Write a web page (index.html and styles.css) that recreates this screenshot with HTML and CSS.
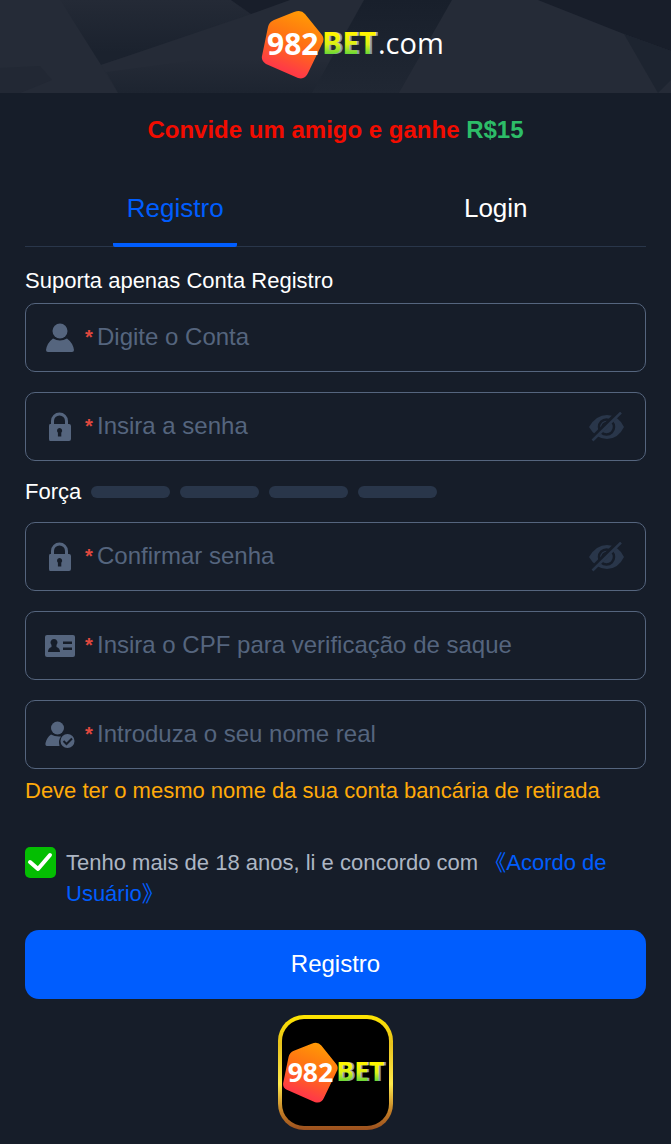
FILE: index.html
```html
<!DOCTYPE html>
<html lang="pt-BR">
<head>
<meta charset="utf-8">
<meta name="viewport" content="width=device-width, initial-scale=1">
<title>982BET.com - Registro</title>
<link rel="stylesheet" href="styles.css">
</head>
<body>
<svg class="defs" aria-hidden="true">
  <defs>
    <linearGradient id="gem" x1="0.65" y1="0" x2="0.3" y2="1">
      <stop offset="0" stop-color="#ff9b04"/><stop offset="0.5" stop-color="#ff6a17"/><stop offset="0.85" stop-color="#ff3c45"/><stop offset="1" stop-color="#ff3434"/>
    </linearGradient>
    <linearGradient id="lime" x1="0" y1="0" x2="0" y2="1">
      <stop offset="0.3" stop-color="#fff500"/><stop offset="0.55" stop-color="#d9f016"/><stop offset="0.8" stop-color="#5fd43a"/>
    </linearGradient>
    <linearGradient id="shadeDown" x1="0" y1="0" x2="0" y2="1">
      <stop offset="0" stop-color="#252b37"/><stop offset="1" stop-color="#1d2430"/>
    </linearGradient>
    <linearGradient id="shadeUp" x1="0" y1="0" x2="0" y2="1">
      <stop offset="0" stop-color="#181f2b"/><stop offset="1" stop-color="#202733"/>
    </linearGradient>
    <linearGradient id="shadeLeft" x1="0" y1="0" x2="0" y2="1">
      <stop offset="0" stop-color="#242a36"/><stop offset="0.8" stop-color="#1b222e"/>
    </linearGradient>
    <symbol id="mark" viewBox="0 0 120 70">
      <path fill="url(#gem)" d="M7 17Q8 12 13 10L33 2Q40-1 44 4L61 25Q64 29 61 34L47 63Q44 70 37 68L5 54Q0 51 1 46Z"/>
      <text class="mark-num" x="6" y="45">982</text>
      <text class="mark-shadow" x="63" y="44">BET</text>
      <text class="mark-bet" x="61" y="44" fill="url(#lime)">BET</text>
    </symbol>
    <symbol id="lock" viewBox="0 0 30 30">
      <path fill="none" stroke="currentColor" stroke-width="3" d="M7.5 13V9a7 7 0 0 1 14 0v4"/>
      <path fill="currentColor" fill-rule="evenodd" d="M5 12h19q2 0 2 2v13q0 2-2 2H5q-1 0-1-2V14q0-2 1-2ZM14.500 16a2.700 2.700 0 0 0-1.600 4.700V24.500h3.400V20.700A2.700 2.700 0 0 0 14.500 16Z"/>
    </symbol>
    <symbol id="eye-off" viewBox="0 0 36 30">
      <path fill="currentColor" d="M0 15Q7 3 18 3 29 3 35 15 29 27 18 27 7 27 0 15Z"/>
      <circle cx="17.500" cy="15" r="7.500" fill="none" stroke="#161d29" stroke-width="2.500"/>
      <path fill="none" stroke="#161d29" stroke-width="2.500" d="M13.500 16q0-5 5-5"/>
      <path stroke="#161d29" stroke-width="5" d="M2 28 31 -1"/>
      <path stroke="currentColor" stroke-width="2.500" d="M3.500 28.500 32 .5"/>
    </symbol>
  </defs>
</svg>

<header class="top">
  <svg class="top-art" viewBox="0 0 671 93" preserveAspectRatio="none" aria-hidden="true">
    <path fill="#252b37" d="M0 0H671V93H0Z"/>
    <path fill="url(#shadeLeft)" d="M60 0H240L260 14 101 65Z"/>
    <path fill="#252b37" d="M231 0H290L364 0 312 93H118L101 65 251 14Z"/>
    <path fill="#181e2a" d="M231 0H290L251 14Z"/>
    <path fill="url(#shadeDown)" d="M106 72 210 58 334 62 316 93H118Z"/>
    <path fill="url(#shadeUp)" d="M364 0H452L399 93H312Z"/>
    <path fill="#181e2a" d="M538 0H671V51L624 34Z"/>
    <path fill="#1d2430" d="M624 34 671 51V80L658 93Z"/>
    <path fill="#222834" d="M0 68 40 66 52 80 20 93H0Z"/>
  </svg>
  <svg class="brand" viewBox="0 0 184 70" role="img" aria-label="982BET.com">
    <use href="#mark" width="120" height="70"/>
    <text class="brand-com" x="117" y="44">.com</text>
  </svg>
</header>

<main class="page">
  <p class="promo">Convide um amigo e ganhe <span class="prize">R$15</span></p>

  <nav class="tabs">
    <button class="tab active" type="button">Registro</button>
    <button class="tab" type="button">Login</button>
  </nav>

  <form class="form">
    <label class="caption" for="account">Suporta apenas Conta Registro</label>
    <div class="field">
      <svg class="icon" viewBox="0 0 30 30" aria-hidden="true"><circle cx="15" cy="8" r="7.500" fill="currentColor"/><path fill="currentColor" d="M8 15.500Q15 19.500 22 15.500 28 20 29 27 29 29 27 29H3Q1 29 1 27 2 20 8 15.500Z"/></svg>
      <span class="star">*</span>
      <input class="input" id="account" type="text" placeholder="Digite o Conta">
    </div>
    <div class="field">
      <svg class="icon" aria-hidden="true"><use href="#lock"/></svg>
      <span class="star">*</span>
      <input class="input" type="password" aria-label="Senha" placeholder="Insira a senha">
      <button class="reveal" type="button" aria-label="Mostrar senha"><svg class="eye"><use href="#eye-off"/></svg></button>
    </div>
    <div class="strength">
      <span>Força</span>
      <i class="bar"></i><i class="bar"></i><i class="bar"></i><i class="bar"></i>
    </div>
    <div class="field">
      <svg class="icon" aria-hidden="true"><use href="#lock"/></svg>
      <span class="star">*</span>
      <input class="input" type="password" aria-label="Confirmar senha" placeholder="Confirmar senha">
      <button class="reveal" type="button" aria-label="Mostrar senha"><svg class="eye"><use href="#eye-off"/></svg></button>
    </div>
    <div class="field">
      <svg class="icon" viewBox="0 0 30 30" aria-hidden="true"><rect y="4" width="30" height="22" rx="2" fill="currentColor"/><path fill="#161d29" d="M9 8a3.500 3.500 0 0 1 2.500 6V16Q15 17 15 21H3Q3 17 6.500 16V14A3.500 3.500 0 0 1 9 8ZM18 10.500H27V13H18ZM18 16.500H27V19H18Z"/></svg>
      <span class="star">*</span>
      <input class="input" type="text" aria-label="CPF" placeholder="Insira o CPF para verificação de saque">
    </div>
    <div class="field">
      <svg class="icon" viewBox="0 0 30 30" aria-hidden="true"><circle cx="12.500" cy="8" r="6.500" fill="currentColor"/><path fill="currentColor" d="M6 14.500Q10 17 16 16.500 13 20 14.500 26H2Q0 26 .5 23 2 17 6 14.500Z"/><circle cx="22.500" cy="21" r="7" fill="currentColor"/><path fill="none" stroke="#161d29" stroke-width="2" d="m18.500 21 3 3 5.500-5.500"/></svg>
      <span class="star">*</span>
      <input class="input" type="text" aria-label="Nome real" placeholder="Introduza o seu nome real">
    </div>
    <p class="hint">Deve ter o mesmo nome da sua conta bancária de retirada</p>

    <div class="terms">
      <span class="check">
        <input class="check-box" id="terms" type="checkbox" checked>
        <svg class="check-tick" viewBox="0 0 31 31" aria-hidden="true"><path fill="none" stroke="#fff" stroke-width="4" stroke-linecap="round" stroke-linejoin="round" d="m5 15 8 7L25 8"/></svg>
      </span>
      <p class="terms-text"><label for="terms">Tenho mais de 18 anos, li e concordo com</label> <a class="link" href="#">《Acordo de Usuário》</a></p>
    </div>

    <button class="submit" type="submit">Registro</button>
  </form>

  <a class="app" href="#" aria-label="982BET">
    <svg class="app-mark" viewBox="0 0 120 70" aria-hidden="true"><use href="#mark"/></svg>
  </a>
</main>
</body>
</html>
```

FILE: styles.css
```css
* {
  box-sizing: border-box;
}

body {
  margin: 0;
  background: #161d29;
  color: #fff;
  font-family: "Liberation Sans", "Noto Sans CJK SC", Arial, sans-serif;
  font-size: 22px;
  line-height: 31px;
}

button,
input {
  margin: 0;
  padding: 0;
  border: 0;
  background: none;
  color: inherit;
  font: inherit;
}

button {
  cursor: pointer;
}

p {
  margin: 0;
}

.defs {
  position: absolute;
  width: 0;
  height: 0;
}

.top {
  display: grid;
  height: 93px;
}

.top-art,
.brand {
  grid-area: 1 / 1;
}

.top-art {
  width: 100%;
  height: 93px;
}

.brand {
  width: 184px;
  height: 70px;
  place-self: center;
  margin-top: -4px;
  margin-left: 34px;
}

.mark-num,
.mark-bet,
.mark-shadow {
  font-family: "Open Sans", "Noto Sans", sans-serif;
  font-weight: 700;
  font-size: 30px;
}

.mark-num {
  fill: #fff;
}

.mark-shadow {
  fill: #8d96a3;
}

.brand-com {
  fill: #fff;
  font-family: "Open Sans", "Noto Sans", sans-serif;
  font-size: 29px;
}

.page {
  display: flex;
  flex-direction: column;
  padding: 0 25px 14px;
}

.promo {
  padding: 21px 0 23px;
  color: #f20c00;
  font-size: 24px;
  font-weight: 700;
  text-align: center;
}

.prize {
  color: #2dbd68;
}

.tabs {
  display: flex;
  justify-content: space-around;
  gap: 20px;
  height: 79px;
  border-bottom: 1px solid #29364a;
}

.tab {
  width: 124px;
  margin-bottom: -1px;
  padding-top: 6px;
  border-bottom: 4px solid transparent;
  border-radius: 2px;
  font-size: 26px;
}

.tab.active {
  border-color: #005dfe;
  color: #005dfe;
}

.form {
  display: flex;
  flex-direction: column;
}

.caption {
  margin: 18px 0 7px;
}

.field {
  display: flex;
  align-items: center;
  height: 69px;
  padding: 0 20px 0 19px;
  border: 1px solid #55657e;
  border-radius: 10px;
  font-size: 24px;
}

.field + .field {
  margin-top: 20px;
}

.icon {
  flex: none;
  width: 30px;
  height: 30px;
  color: #55657e;
}

.star {
  width: 12px;
  margin-left: 10px;
  color: #e0483e;
  font-size: 20px;
  font-weight: 700;
}

.input {
  flex: 1;
  min-width: 0;
  height: 34px;
  padding-bottom: 2px;
  outline: 0;
}

.input::placeholder {
  color: #55657e;
  opacity: 1;
}

.reveal {
  display: flex;
  color: #29364a;
}

.eye {
  width: 36px;
  height: 30px;
}

.strength {
  display: flex;
  align-items: center;
  gap: 10px;
  padding: 15px 0;
}

.bar {
  width: 79px;
  height: 12px;
  border-radius: 6px;
  background: #29364a;
}

.hint {
  padding-top: 6px;
  color: #ffaa09;
}

.terms {
  display: flex;
  gap: 10px;
  margin: 41px 0 21px;
}

.check {
  display: grid;
  flex: none;
  height: 31px;
}

.check-box,
.check-tick {
  grid-area: 1 / 1;
  width: 31px;
  height: 31px;
}

.check-box {
  appearance: none;
  border-radius: 5px;
  background: #04be02;
}

.check-tick {
  pointer-events: none;
  visibility: hidden;
}

.check-box:checked + .check-tick {
  visibility: visible;
}

.terms-text {
  color: #adb6c4;
}

.link {
  color: #005dfe;
  text-decoration: none;
}

.submit {
  height: 69px;
  padding-bottom: 2px;
  border-radius: 14px;
  background: #005dfe;
  color: #fff;
  font-size: 24px;
}

.app {
  display: flex;
  align-items: center;
  align-self: center;
  width: 115px;
  height: 115px;
  margin-top: 16px;
  border: 4px solid transparent;
  border-radius: 26px;
  background:
    linear-gradient(#000, #000) padding-box,
    linear-gradient(#ffe600, #e8c21c 25%, #ffe94a 60%, #c07a25 85%, #9a4f1e) border-box;
}

.app-mark {
  width: 107px;
  height: 62px;
}
```
